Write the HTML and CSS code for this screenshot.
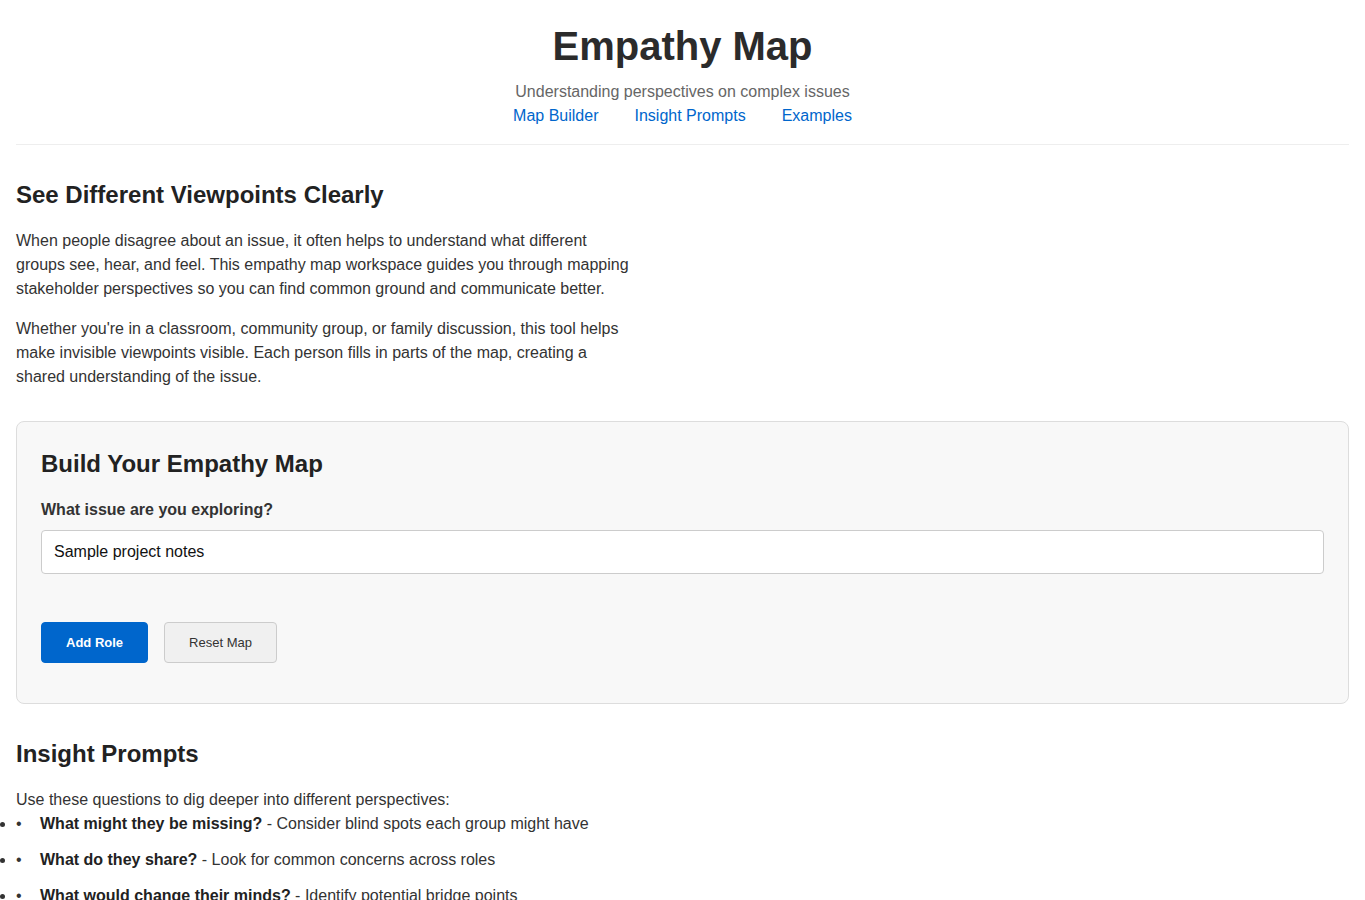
FILE: index.html
```html
<!DOCTYPE html>
<html lang="en">
<head>
<meta charset="utf-8">
<title>Empathy Map</title>
<link rel="stylesheet" href="styles.css">
</head>
<body>
<div class="page">
  <header class="site-header">
    <h1 class="site-title">Empathy Map</h1>
    <p class="site-tagline">Understanding perspectives on complex issues</p>
    <nav class="site-nav">
      <a href="#builder">Map Builder</a>
      <a href="#prompts">Insight Prompts</a>
      <a href="#examples">Examples</a>
    </nav>
  </header>

  <section class="intro">
    <h2 class="section-title">See Different Viewpoints Clearly</h2>
    <p class="body-text">When people disagree about an issue, it often helps to understand what different groups see, hear, and feel. This empathy map workspace guides you through mapping stakeholder perspectives so you can find common ground and communicate better.</p>
    <p class="body-text">Whether you're in a classroom, community group, or family discussion, this tool helps make invisible viewpoints visible. Each person fills in parts of the map, creating a shared understanding of the issue.</p>
  </section>

  <section class="builder" id="builder">
    <h2 class="section-title">Build Your Empathy Map</h2>
    <label class="field-label" for="issue">What issue are you exploring?</label>
    <input class="text-input" id="issue" type="text" value="Sample project notes">
    <div class="actions">
      <button class="btn btn-primary" type="button">Add Role</button>
      <button class="btn btn-secondary" type="button">Reset Map</button>
    </div>
  </section>

  <section class="prompts" id="prompts">
    <h2 class="section-title">Insight Prompts</h2>
    <p class="prompts-lead">Use these questions to dig deeper into different perspectives:</p>
    <ul class="prompt-list">
      <li><strong>What might they be missing?</strong> - Consider blind spots each group might have</li>
      <li><strong>What do they share?</strong> - Look for common concerns across roles</li>
      <li><strong>What would change their minds?</strong> - Identify potential bridge points</li>
    </ul>
  </section>
</div>
</body>
</html>
```
FILE: styles.css
```css
* {
  box-sizing: border-box;
}

body {
  margin: 0;
  background: #ffffff;
  color: #333333;
  font-family: "Liberation Sans", Arial, sans-serif;
  font-size: 16px;
  line-height: 1.5;
}

.page {
  padding: 0 16px;
}

/* Header */
.site-header {
  padding: 22px 0 16px;
  border-bottom: 1px solid #eeeeee;
  text-align: center;
  margin-bottom: 33px;
}

.site-title {
  margin: 0 0 10px;
  font-size: 40px;
  line-height: 48px;
  font-weight: 700;
  color: #2b2b2b;
}

.site-tagline {
  margin: 0;
  color: #666666;
  line-height: 24px;
}

.site-nav {
  display: flex;
  justify-content: center;
  gap: 36px;
  line-height: 24px;
}

.site-nav a {
  color: #0066cc;
  text-decoration: none;
}

/* Headings & text */
.section-title {
  margin: 0 0 17px;
  font-size: 24px;
  line-height: 1.4;
  font-weight: 700;
  color: #222222;
}

.intro {
  margin-bottom: 32px;
}

.body-text {
  max-width: 620px;
  margin: 0 0 16px;
  line-height: 24px;
}

.intro .body-text:last-child {
  margin-bottom: 0;
}

/* Builder panel */
.builder {
  background: #f8f8f8;
  border: 1px solid #dddddd;
  border-radius: 8px;
  padding: 25px 24px 24px;
  margin-bottom: 33px;
}

.field-label {
  display: block;
  font-weight: 700;
  line-height: 26px;
  margin-bottom: 7px;
}

.text-input {
  display: block;
  width: 100%;
  height: 44px;
  padding: 0 12px;
  border: 1px solid #cccccc;
  border-radius: 4px;
  background: #ffffff;
  font-family: inherit;
  font-size: 16px;
  color: #111111;
}

.actions {
  display: flex;
  gap: 16px;
  margin: 48px 0 16px;
}

.btn {
  padding: 12px 24px;
  border-radius: 4px;
  font-family: inherit;
  font-size: 13px;
  line-height: 15px;
  cursor: pointer;
}

.btn-primary {
  background: #0066cc;
  border: 1px solid #0066cc;
  color: #ffffff;
  font-weight: 700;
}

.btn-secondary {
  background: #f0f0f0;
  border: 1px solid #cccccc;
  color: #333333;
}

/* Prompts */
.prompts-lead {
  margin: 0;
  line-height: 24px;
}

.prompt-list {
  margin: 0;
  padding: 0;
  list-style: disc outside;
}

.prompt-list li {
  position: relative;
  padding-left: 24px;
  margin-bottom: 12px;
  line-height: 24px;
}

.prompt-list li::before {
  content: "\2022";
  position: absolute;
  left: 0;
  top: 0;
}

.prompt-list strong {
  color: #222222;
}
```
